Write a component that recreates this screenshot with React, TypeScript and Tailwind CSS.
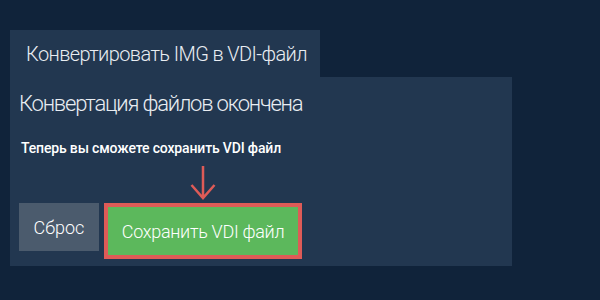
import React from 'react';

const App = () => {
  return (
    <div className="w-[600px] h-[300px] bg-[#10233a] pt-[30px] pl-[10px] font-['Roboto',sans-serif]">
      {/* tab */}
      <div className="w-[310px] h-[47px] bg-[#223750] flex items-center pl-[16px]">
        <span className="text-[#e9edf2] text-[20px] font-light whitespace-nowrap tracking-[-0.6px]">Конвертировать IMG в VDI-файл</span>
      </div>

      {/* panel */}
      <div className="w-[502px] h-[189px] bg-[#223750] pl-[9px] pt-[12px]">
        <h2 className="text-[#e9edf2] text-[22px] font-light leading-[30px] whitespace-nowrap tracking-[-1.2px]">Конвертация файлов окончена</h2>
        <p className="text-white text-[14px] font-medium mt-[19px] ml-[2px] whitespace-nowrap tracking-[-0.15px]">Теперь вы сможете сохранить VDI файл</p>

        <div className="flex items-end mt-[6px]">
          <button className="w-[80px] h-[48px] mb-[8px] bg-[#4b5b6d] text-white text-[18px] font-light">Сброс</button>
          <div className="flex flex-col items-center ml-[5px]">
            <svg width="26" height="36" viewBox="0 0 26 36" className="mb-[2px]">
              <path d="M13 1 V33 M1.5 20 L13 33 L24.5 20" stroke="#de5b57" strokeWidth="2.5" fill="none" />
            </svg>
            <button className="w-[198px] h-[56px] bg-[#5cb85c] border-[4px] border-[#de5b57] text-white text-[18px] font-light tracking-[-0.3px]">Сохранить VDI файл</button>
          </div>
        </div>
      </div>
    </div>
  );
};

export default App;
